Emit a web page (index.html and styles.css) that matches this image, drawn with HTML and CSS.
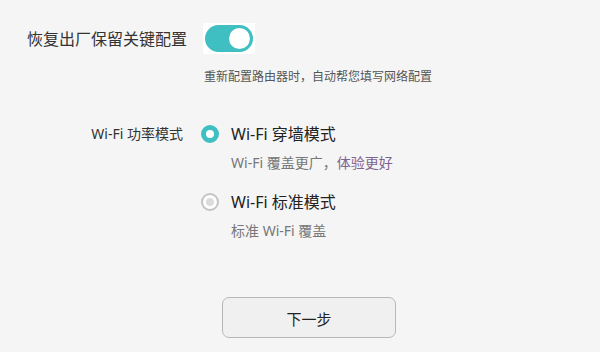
FILE: index.html
```html
<!DOCTYPE html>
<html lang="zh-CN">
<head>
<meta charset="utf-8">
<title>路由器设置</title>
<link rel="stylesheet" href="styles.css">
</head>
<body>
<main class="page">
  <div class="keep-row">
    <span class="keep-label">恢复出厂保留关键配置</span>
    <span class="toggle-wrap"><span class="toggle on"><span class="knob"></span></span></span>
  </div>
  <p class="keep-hint">重新配置路由器时，自动帮您填写网络配置</p>

  <div class="mode-row">
    <span class="mode-label">Wi-Fi 功率模式</span>
    <div class="options">
      <div class="option">
        <span class="radio checked"></span>
        <div class="option-text">
          <div class="option-title">Wi-Fi 穿墙模式</div>
          <div class="option-sub">Wi-Fi 覆盖更广，<span class="accent">体验更好</span></div>
        </div>
      </div>
      <div class="option">
        <span class="radio"></span>
        <div class="option-text">
          <div class="option-title">Wi-Fi 标准模式</div>
          <div class="option-sub">标准 Wi-Fi 覆盖</div>
        </div>
      </div>
    </div>
  </div>

  <div class="actions">
    <button class="next-btn" type="button">下一步</button>
  </div>
</main>
</body>
</html>
```

FILE: styles.css
```css
html, body {
  margin: 0;
  padding: 0;
  background: #f5f5f5;
}
body {
  font-family: "Noto Sans", "Noto Sans CJK SC", sans-serif;
  color: #333;
}
.page {
  width: 600px;
  height: 352px;
  padding-top: 25px;
  box-sizing: border-box;
}
.keep-row {
  display: flex;
  align-items: center;
  height: 27px;
}
.keep-label {
  margin-left: 27px;
  width: 158px;
  font-size: 16px;
  line-height: 20px;
  white-space: nowrap;
  color: #333;
}
.toggle-wrap {
  margin-left: 18px;
  padding: 2px;
  background: #fff;
  display: flex;
}
.toggle {
  position: relative;
  display: block;
  width: 48px;
  height: 27px;
  border-radius: 14px;
  background: #3fbfc2;
}
.knob {
  position: absolute;
  top: 3px;
  right: 3px;
  width: 21px;
  height: 21px;
  border-radius: 50%;
  background: #fff;
}
.keep-hint {
  margin: 17px 0 0 204px;
  font-size: 12px;
  line-height: 16px;
  color: #555;
}
.mode-row {
  display: flex;
  margin-top: 39px;
}
.mode-label {
  width: 183px;
  text-align: right;
  font-size: 14px;
  line-height: 20px;
  color: #333;
  white-space: nowrap;
}
.options {
  margin-left: 18px;
  display: flex;
  flex-direction: column;
  gap: 19px;
}
.option {
  display: flex;
  align-items: flex-start;
}
.radio {
  box-sizing: border-box;
  width: 18px;
  height: 18px;
  margin-top: 1px;
  border-radius: 50%;
  background: #fff;
  border: 2px solid #c4c4c4;
  display: flex;
  align-items: center;
  justify-content: center;
}
.radio::after {
  content: "";
  width: 8px;
  height: 8px;
  border-radius: 50%;
  background: #dcdcdc;
}
.radio.checked {
  border: 5.5px solid #3fbfc2;
}
.radio.checked::after {
  display: none;
}
.option-text {
  margin-left: 12px;
}
.option-title {
  font-size: 16px;
  line-height: 20px;
  color: #222;
  white-space: nowrap;
}
.option-sub {
  margin-top: 9px;
  font-size: 14px;
  line-height: 20px;
  color: #777;
  white-space: nowrap;
}
.accent {
  color: #7f6390;
}
.actions {
  margin-top: 56px;
  padding-left: 222px;
}
.next-btn {
  width: 174px;
  height: 41px;
  border: 1px solid #b8b8b8;
  border-radius: 7px;
  background: #f0f0f0;
  font-family: "Noto Sans CJK SC", "Noto Sans", sans-serif;
  font-size: 15px;
  color: #222;
  padding: 2px 0 0;
}
```
